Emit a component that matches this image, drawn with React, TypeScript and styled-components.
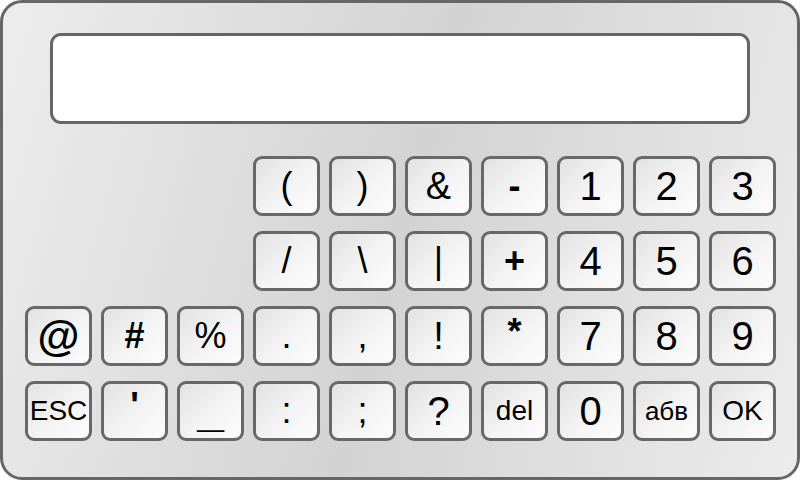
import React from "react";
import styled, { createGlobalStyle } from "styled-components";

const GlobalStyle = createGlobalStyle`
  html, body {
    margin: 0;
    padding: 0;
    width: 800px;
    height: 480px;
    overflow: hidden;
    background: #ffffff;
  }
  * { box-sizing: border-box; }
`;

const Panel = styled.div`
  width: 800px;
  height: 480px;
  border: 3px solid #666666;
  border-radius: 22px;
  background: linear-gradient(105deg, #ededed 0%, #d3d3d3 50%, #ececec 100%);
  padding: 30px 22px 0 22px;
  display: flex;
  flex-direction: column;
  font-family: "Liberation Sans", Arial, sans-serif;
`;

const Display = styled.div`
  height: 91px;
  margin: 0 25px;
  background: #ffffff;
  border: 3px solid #666666;
  border-radius: 11px;
`;

const Keys = styled.div`
  margin-top: 32px;
  display: grid;
  grid-template-columns: repeat(10, 67px);
  grid-auto-rows: 60px;
  column-gap: 9px;
  row-gap: 15px;
`;

const Spacer = styled.div<{ $span: number }>`
  grid-column: span ${(p) => p.$span};
`;

const Key = styled.button<{ $size: number; $bold: boolean; $shift: number }>`
  border: 3px solid #686868;
  border-radius: 9px;
  background: linear-gradient(135deg, #e2e2e2 0%, #f4f4f4 55%, #fcfcfc 100%);
  padding: 0;
  margin: 0;
  display: flex;
  align-items: center;
  justify-content: center;
  font-family: "Liberation Sans", Arial, sans-serif;
  font-size: ${(p) => p.$size}px;
  font-weight: ${(p) => (p.$bold ? 700 : 400)};
  color: #000000;
  line-height: 1;
  cursor: pointer;
  span {
    position: relative;
    top: ${(p) => p.$shift}px;
  }
`;

type K = { t: string; size?: number; bold?: boolean; shift?: number };

const rows: { offset: number; keys: K[] }[] = [
  {
    offset: 3,
    keys: [
      { t: "(", size: 36 },
      { t: ")", size: 36 },
      { t: "&", size: 38 },
      { t: "-", size: 36, bold: true },
      { t: "1", size: 40 },
      { t: "2", size: 40 },
      { t: "3", size: 40 },
    ],
  },
  {
    offset: 3,
    keys: [
      { t: "/", size: 36 },
      { t: "\\", size: 36 },
      { t: "|", size: 36 },
      { t: "+", size: 36, bold: true },
      { t: "4", size: 40 },
      { t: "5", size: 40 },
      { t: "6", size: 40 },
    ],
  },
  {
    offset: 0,
    keys: [
      { t: "@", size: 43, bold: true },
      { t: "#", size: 36, bold: true },
      { t: "%", size: 36 },
      { t: ".", size: 36 },
      { t: ",", size: 36 },
      { t: "!", size: 38 },
      { t: "*", size: 36, bold: true, shift: -4 },
      { t: "7", size: 40 },
      { t: "8", size: 40 },
      { t: "9", size: 40 },
    ],
  },
  {
    offset: 0,
    keys: [
      { t: "ESC", size: 28 },
      { t: "'", size: 36, bold: true, shift: -5 },
      { t: "_", size: 48, bold: true, shift: -1 },
      { t: ":", size: 36 },
      { t: ";", size: 36 },
      { t: "?", size: 40 },
      { t: "del", size: 28 },
      { t: "0", size: 40 },
      { t: "абв", size: 26 },
      { t: "OK", size: 28 },
    ],
  },
];

export default function App() {
  return (
    <>
      <GlobalStyle />
      <Panel>
        <Display />
        <Keys>
          {rows.map((row, ri) => (
            <React.Fragment key={ri}>
              {row.offset > 0 && <Spacer $span={row.offset} />}
              {row.keys.map((k, ki) => (
                <Key
                  key={ki}
                  $size={k.size ?? 36}
                  $bold={!!k.bold}
                  $shift={k.shift ?? 0}
                >
                  <span>{k.t}</span>
                </Key>
              ))}
            </React.Fragment>
          ))}
        </Keys>
      </Panel>
    </>
  );
}
